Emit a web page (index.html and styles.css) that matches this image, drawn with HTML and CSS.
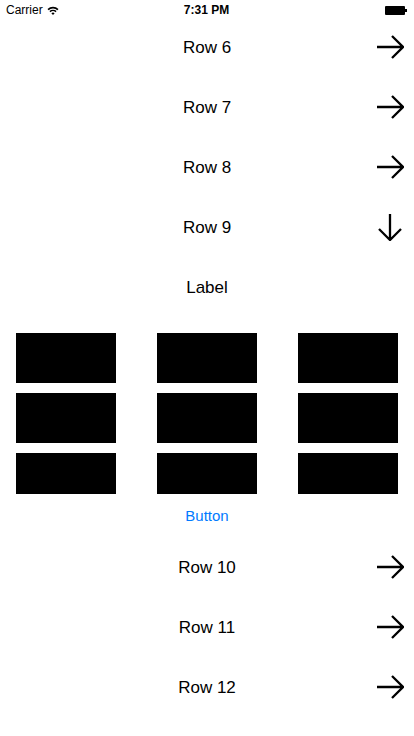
FILE: index.html
```html
<!DOCTYPE html>
<html lang="en">
<head>
    <meta charset="UTF-8">
    <meta name="viewport" content="width=device-width, initial-scale=1.0">
    <title>Rows</title>
    <link rel="stylesheet" href="styles.css">
</head>
<body>

<div class="status-bar">
    <div class="carrier">
        Carrier
        <svg class="wifi" width="12" height="9" viewBox="0 0 12 9">
            <path d="M0.5 3 A8 8 0 0 1 11.5 3 L10.4 4.2 A6.4 6.4 0 0 0 1.6 4.2 Z" fill="#000"/>
            <path d="M2.4 5.1 A5.2 5.2 0 0 1 9.6 5.1 L8.5 6.3 A3.6 3.6 0 0 0 3.5 6.3 Z" fill="#000"/>
            <path d="M4.4 7.2 A2.3 2.3 0 0 1 7.6 7.2 L6 8.9 Z" fill="#000"/>
        </svg>
    </div>
    <div class="time">7:31 PM</div>
    <div class="battery"><span class="battery-body"></span><span class="battery-nub"></span></div>
</div>

<div class="content">
    <div class="row">
        <span class="row-title">Row 6</span>
        <svg class="arrow" width="28" height="28" viewBox="0 0 28 28"><path d="M1 14 H27 M16 3 L27 14 L16 25"/></svg>
    </div>
    <div class="row">
        <span class="row-title">Row 7</span>
        <svg class="arrow" width="28" height="28" viewBox="0 0 28 28"><path d="M1 14 H27 M16 3 L27 14 L16 25"/></svg>
    </div>
    <div class="row">
        <span class="row-title">Row 8</span>
        <svg class="arrow" width="28" height="28" viewBox="0 0 28 28"><path d="M1 14 H27 M16 3 L27 14 L16 25"/></svg>
    </div>
    <div class="row">
        <span class="row-title">Row 9</span>
        <svg class="arrow" width="28" height="28" viewBox="0 0 28 28"><path d="M14 1 V27 M3 16 L14 27 L25 16"/></svg>
    </div>

    <div class="label-row"><span class="row-title">Label</span></div>

    <div class="grid">
        <div class="cell"></div>
        <div class="cell"></div>
        <div class="cell"></div>
        <div class="cell"></div>
        <div class="cell"></div>
        <div class="cell"></div>
        <div class="cell short"></div>
        <div class="cell short"></div>
        <div class="cell short"></div>
    </div>

    <div class="button-row"><button class="link-button">Button</button></div>

    <div class="row">
        <span class="row-title">Row 10</span>
        <svg class="arrow" width="28" height="28" viewBox="0 0 28 28"><path d="M1 14 H27 M16 3 L27 14 L16 25"/></svg>
    </div>
    <div class="row">
        <span class="row-title">Row 11</span>
        <svg class="arrow" width="28" height="28" viewBox="0 0 28 28"><path d="M1 14 H27 M16 3 L27 14 L16 25"/></svg>
    </div>
    <div class="row">
        <span class="row-title">Row 12</span>
        <svg class="arrow" width="28" height="28" viewBox="0 0 28 28"><path d="M1 14 H27 M16 3 L27 14 L16 25"/></svg>
    </div>
</div>

</body>
</html>
```

FILE: styles.css
```css
body {
    font-family: "Liberation Sans", Arial, sans-serif;
    margin: 0;
    padding: 0;
    background-color: #fff;
    color: #000;
    width: 414px;
    height: 736px;
    overflow: hidden;
}
.status-bar {
    position: fixed;
    top: 0;
    left: 0;
    right: 0;
    height: 20px;
    display: flex;
    align-items: center;
    justify-content: space-between;
    padding: 0 6px;
    font-size: 12px;
    background-color: #fff;
    z-index: 2;
}
.carrier {
    display: flex;
    align-items: center;
    gap: 4px;
    width: 80px;
}
.time {
    font-weight: bold;
}
.battery {
    display: flex;
    align-items: center;
    justify-content: flex-end;
    width: 80px;
    padding-right: 1px;
}
.battery-body {
    width: 20px;
    height: 9px;
    background-color: #000;
    border-radius: 1px;
}
.battery-nub {
    width: 1.5px;
    height: 3px;
    background-color: #000;
}
.content {
    padding-top: 17px;
}
.row {
    height: 60px;
    position: relative;
    display: flex;
    align-items: center;
    justify-content: center;
    font-size: 17px;
}
.row-title {
    padding-top: 2px;
}
.arrow {
    position: absolute;
    right: 10px;
    top: 16px;
    fill: none;
    stroke: #000;
    stroke-width: 2.3;
}
.label-row {
    height: 60px;
    display: flex;
    align-items: center;
    justify-content: center;
    font-size: 17px;
}
.grid {
    display: grid;
    grid-template-columns: repeat(3, 100px);
    justify-content: space-between;
    row-gap: 10px;
    padding: 16px 16px 0;
}
.cell {
    height: 50px;
    background-color: #000;
}
.cell.short {
    height: 41px;
}
.button-row {
    height: 43px;
    display: flex;
    align-items: center;
    justify-content: center;
}
.link-button {
    background: none;
    border: none;
    padding: 0;
    font-family: inherit;
    font-size: 15px;
    color: #007aff;
    cursor: pointer;
}
```
